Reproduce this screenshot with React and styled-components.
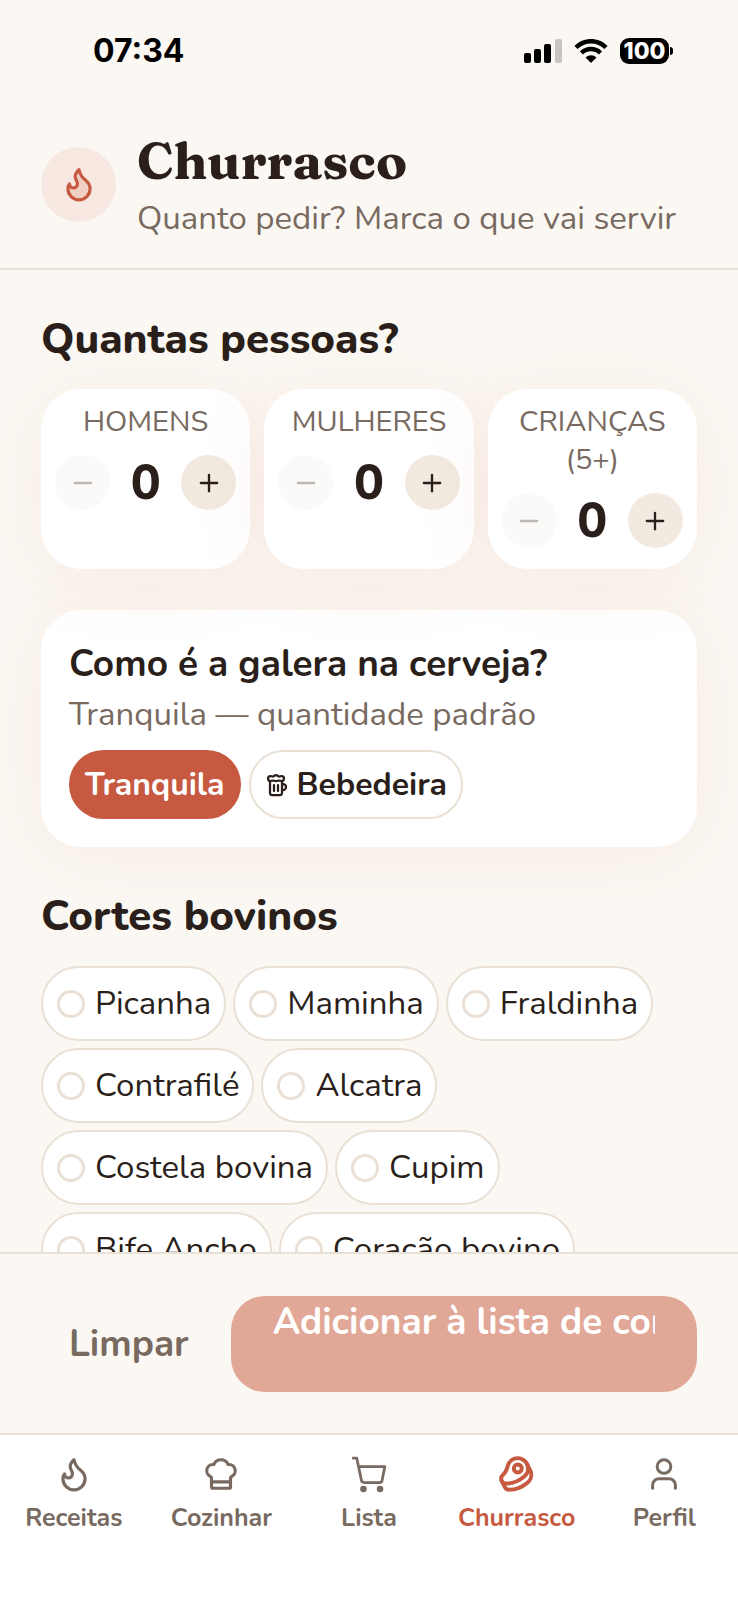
import React, { useState } from 'react';
import styled, { createGlobalStyle } from 'styled-components';
import { Beef, Beer, ChefHat, Minus, Plus } from 'lucide-react';

const GlobalStyle = createGlobalStyle`
  * {
    box-sizing: border-box;
  }
  :root {
    --cream: #fbf8f3;
    --ink: #2a1f1a;
    --muted: #786a60;
    --line: #eae0d5;
    --brick: #c6593f;
  }
  body {
    margin: 0;
    background: var(--cream);
    color: var(--ink);
    font-family: Nunito, 'Noto Sans', 'Open Sans', sans-serif;
  }
  button, input {
    font-family: inherit;
    color: inherit;
  }
`;

const Screen = styled.div`
  display: flex;
  flex-direction: column;
  height: 100vh;
  overflow: hidden;
`;

const StatusBar = styled.div`
  display: flex;
  align-items: center;
  justify-content: space-between;
  flex: none;
  height: 100px;
  padding: 1px 65px 0 93px;
  color: #000;
`;

const Clock = styled.span`
  font: 700 32px/40px Inter, sans-serif;
`;

const StatusIcons = styled.div`
  display: flex;
  align-items: center;
  gap: 12px;
`;

const Battery = styled.span`
  display: flex;
  align-items: center;
  gap: 1px;
  &::after {
    content: '';
    width: 3px;
    height: 8px;
    border-radius: 0 3px 3px 0;
    background: #000;
  }
`;

const BatteryLevel = styled.span`
  width: 49px;
  border-radius: 9px;
  background: #000;
  color: #fff;
  text-align: center;
  font: 800 23px/26px Inter, sans-serif;
`;

const Header = styled.header`
  display: flex;
  align-items: center;
  flex: none;
  gap: 21px;
  height: 170px;
  padding: 0 41px;
  border-bottom: 2px solid var(--line);
`;

const HeaderIcon = styled.div`
  display: grid;
  place-items: center;
  flex: none;
  width: 75px;
  height: 75px;
  border-radius: 50%;
  background: #f7e8e2;
  color: var(--brick);
`;

const Title = styled.h1`
  margin: 0;
  font: 700 51px/70px Fraunces, 'DejaVu Serif', serif;
`;

const Subtitle = styled.p`
  margin: 0;
  color: var(--muted);
  font-size: 33px;
  line-height: 46px;
  white-space: nowrap;
`;

const Content = styled.main`
  flex: 1;
  min-height: 0;
  overflow: hidden;
  padding: 42px 41px 0;
`;

const SectionTitle = styled.h2`
  margin: 0 0 21px;
  font-size: 42px;
  font-weight: 800;
  line-height: 56px;
`;

const Counters = styled.div`
  display: grid;
  grid-template-columns: repeat(3, 1fr);
  gap: 14px;
  margin-bottom: 41px;
`;

const Card = styled.section`
  border-radius: 40px;
  background: #fff;
  box-shadow: 0 8px 80px rgba(198, 89, 63, 0.08);
`;

const CounterCard = styled(Card)`
  padding: 14px 14px 21px;
`;

const CounterLabel = styled.div`
  margin-bottom: 14px;
  color: var(--muted);
  font-size: 29px;
  line-height: 38px;
  text-align: center;
  text-transform: uppercase;
`;

const Stepper = styled.div`
  display: flex;
  align-items: center;
  justify-content: space-between;
`;

const StepButton = styled.button`
  display: grid;
  place-items: center;
  width: 55px;
  height: 55px;
  padding: 0;
  border: 0;
  border-radius: 50%;
  background: #f2eae0;
  &:disabled {
    background: #fbfaf8;
    color: #bdb9b5;
  }
`;

const Count = styled.output`
  font-size: 50px;
  font-weight: 800;
  line-height: 55px;
`;

const BeerCard = styled(Card)`
  margin-bottom: 42px;
  padding: 28px;
`;

const BeerTitle = styled.h3`
  margin: 0;
  font-size: 37px;
  font-weight: 700;
  line-height: 52px;
`;

const BeerHint = styled.p`
  margin: 0;
  color: var(--muted);
  font-size: 33px;
  line-height: 49px;
`;

const Row = styled.div`
  display: flex;
  gap: 8px;
  margin-top: 11px;
`;

const Choice = styled.button`
  display: flex;
  align-items: center;
  gap: 8px;
  height: 69px;
  padding: 0 14px;
  border: 2px solid ${(props) => (props.$active ? 'var(--brick)' : 'var(--line)')};
  border-radius: 35px;
  background: ${(props) => (props.$active ? 'var(--brick)' : '#fff')};
  color: ${(props) => (props.$active ? '#fff' : 'var(--ink)')};
  font-size: 32px;
  font-weight: 700;
`;

const Chips = styled.div`
  display: flex;
  flex-wrap: wrap;
  gap: 7px;
`;

const Chip = styled.label`
  display: flex;
  align-items: center;
  gap: 10px;
  height: 75px;
  padding: 0 13px 0 14px;
  border: 2px solid var(--line);
  border-radius: 38px;
  background: #fff;
  font-size: 33px;
  white-space: nowrap;
`;

const Tick = styled.input`
  appearance: none;
  width: 28px;
  height: 28px;
  margin: 0;
  border: 3px solid var(--line);
  border-radius: 50%;
  &:checked {
    border-color: var(--brick);
    background: var(--brick);
  }
`;

const Actions = styled.div`
  display: flex;
  align-items: center;
  flex: none;
  gap: 14px;
  height: 181px;
  padding: 0 41px;
  border-top: 2px solid var(--line);
`;

const ClearButton = styled.button`
  padding: 0 28px;
  border: 0;
  background: none;
  color: var(--muted);
  font-size: 37px;
  font-weight: 700;
`;

const AddButton = styled.button`
  display: flex;
  align-items: flex-start;
  flex: 1;
  min-width: 0;
  height: 96px;
  padding: 0 42px;
  border: 0;
  border-radius: 34px;
  background: #e2a897;
  color: #fff;
  font-size: 37px;
  font-weight: 700;
  line-height: 52px;
  span {
    overflow: hidden;
    white-space: nowrap;
  }
`;

const TabBar = styled.nav`
  display: grid;
  grid-template-columns: repeat(5, 1fr);
  flex: none;
  height: 167px;
  padding-top: 20px;
  border-top: 2px solid var(--line);
  background: #fff;
`;

const Tab = styled.a`
  display: flex;
  flex-direction: column;
  align-items: center;
  gap: 7px;
  color: ${(props) => (props.$active ? 'var(--brick)' : 'var(--muted)')};
  font-size: 25px;
  font-weight: 700;
  line-height: 36px;
  text-decoration: none;
`;

const FlameIcon = ({ fill = 'none' }) => (
  <svg width="38" height="38" viewBox="0 0 24 24" fill="none" stroke="currentColor" strokeWidth="2" strokeLinecap="round" strokeLinejoin="round">
    <path
      fill={fill}
      d="M8.5 14.5A2.5 2.5 0 0 0 11 12c0-1.38-.5-2-1-3-1.072-2.143-.224-4.054 2-6 .5 2.5 2 4.9 4 6.5 2 1.6 3 3.5 3 5.5a7 7 0 1 1-14 0c0-1.153.433-2.294 1-3a2.5 2.5 0 0 0 2.5 2.5z"
    />
  </svg>
);

const CartIcon = () => (
  <svg width="38" height="38" viewBox="0 0 24 24" fill="none" stroke="currentColor" strokeWidth="1.75" strokeLinecap="round" strokeLinejoin="round">
    <path d="M2 2h2.3l2.9 14a1.800 1.800 0 0 0 1.800 1.400h9.500a1.800 1.800 0 0 0 1.800-1.400L22 7.300H5.400" />
    <circle cx="8.500" cy="21.500" r="1.200" fill="currentColor" />
    <circle cx="19" cy="21.500" r="1.200" fill="currentColor" />
  </svg>
);

const PersonIcon = () => (
  <svg width="38" height="38" viewBox="0 0 24 24" fill="none" stroke="currentColor" strokeWidth="1.9" strokeLinecap="round" strokeLinejoin="round">
    <circle cx="12" cy="7.300" r="4.300" />
    <path d="M4.800 21v-2a4 4 0 0 1 4-4h6.400a4 4 0 0 1 4 4v2" />
  </svg>
);

const SignalIcon = () => (
  <svg width="38" height="24" viewBox="0 0 38 24">
    <rect x="0" y="14" width="7" height="10" rx="2" />
    <rect x="10" y="10" width="7" height="14" rx="2" />
    <rect x="20" y="5" width="7" height="19" rx="2" />
    <rect x="31" y="0" width="7" height="24" rx="2" fill="#c8c4c0" />
  </svg>
);

const WifiIcon = () => (
  <svg width="34" height="24" viewBox="0 0 34 24">
    <g fill="none" stroke="#000" strokeWidth="4.500">
      <path d="M2 8.500a21 21 0 0 1 30 0" />
      <path d="M7.500 14a13.500 13.500 0 0 1 19 0" />
    </g>
    <path d="M17 24l-5.500-5.500a8 8 0 0 1 11 0z" />
  </svg>
);

const people = ['Homens', 'Mulheres', 'Crianças (5+)'];
const cuts = ['Picanha', 'Maminha', 'Fraldinha', 'Contrafilé', 'Alcatra', 'Costela bovina', 'Cupim', 'Bife Ancho', 'Coração bovino'];

const tabs = [
  { name: 'Receitas', icon: <FlameIcon /> },
  { name: 'Cozinhar', icon: <ChefHat size={38} strokeWidth={2} /> },
  { name: 'Lista', icon: <CartIcon /> },
  { name: 'Churrasco', icon: <Beef size={38} strokeWidth={2.5} />, active: true },
  { name: 'Perfil', icon: <PersonIcon /> },
];

function Counter({ label }) {
  const [count, setCount] = useState(0);
  return (
    <CounterCard aria-label={label}>
      <CounterLabel>{label}</CounterLabel>
      <Stepper>
        <StepButton aria-label={`Menos ${label}`} disabled={count === 0} onClick={() => setCount(count - 1)}>
          <Minus size={28} strokeWidth={2} />
        </StepButton>
        <Count>{count}</Count>
        <StepButton aria-label={`Mais ${label}`} onClick={() => setCount(count + 1)}>
          <Plus size={28} strokeWidth={2} />
        </StepButton>
      </Stepper>
    </CounterCard>
  );
}

export default function App() {
  const [mood, setMood] = useState('tranquila');

  return (
    <Screen>
      <GlobalStyle />
      <StatusBar>
        <Clock>07:34</Clock>
        <StatusIcons>
          <SignalIcon />
          <WifiIcon />
          <Battery>
            <BatteryLevel>100</BatteryLevel>
          </Battery>
        </StatusIcons>
      </StatusBar>

      <Header>
        <HeaderIcon>
          <FlameIcon fill="#f0cfc5" />
        </HeaderIcon>
        <div>
          <Title>Churrasco</Title>
          <Subtitle>Quanto pedir? Marca o que vai servir</Subtitle>
        </div>
      </Header>

      <Content>
        <SectionTitle>Quantas pessoas?</SectionTitle>
        <Counters>
          {people.map((label) => (
            <Counter key={label} label={label} />
          ))}
        </Counters>

        <BeerCard>
          <BeerTitle>Como é a galera na cerveja?</BeerTitle>
          <BeerHint>Tranquila — quantidade padrão</BeerHint>
          <Row>
            <Choice $active={mood === 'tranquila'} onClick={() => setMood('tranquila')}>
              Tranquila
            </Choice>
            <Choice $active={mood === 'bebedeira'} onClick={() => setMood('bebedeira')}>
              <Beer size={24} strokeWidth={2.25} />
              Bebedeira
            </Choice>
          </Row>
        </BeerCard>

        <SectionTitle>Cortes bovinos</SectionTitle>
        <Chips>
          {cuts.map((cut) => (
            <Chip key={cut}>
              <Tick type="checkbox" name="cortes" value={cut} />
              {cut}
            </Chip>
          ))}
        </Chips>
      </Content>

      <Actions>
        <ClearButton>Limpar</ClearButton>
        <AddButton disabled>
          <span>Adicionar à lista de compras</span>
        </AddButton>
      </Actions>

      <TabBar>
        {tabs.map((tab) => (
          <Tab key={tab.name} href="#" $active={tab.active}>
            {tab.icon}
            {tab.name}
          </Tab>
        ))}
      </TabBar>
    </Screen>
  );
}
